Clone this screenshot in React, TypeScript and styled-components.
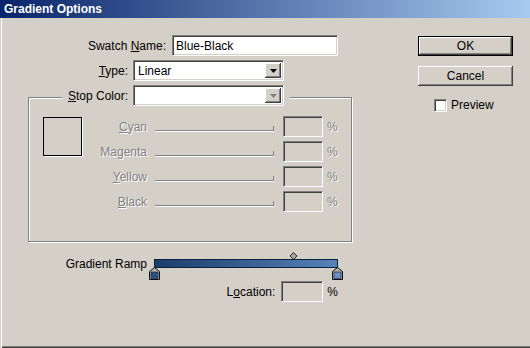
import React from "react";
import styled, { createGlobalStyle, css } from "styled-components";

const GlobalStyle = createGlobalStyle`
  * { box-sizing: border-box; }
  html, body {
    margin: 0;
    background: #d4d0c8;
  }
`;

const sunken = css`
  border: 1px solid;
  border-color: #808080 #ffffff #ffffff #808080;
  box-shadow: inset 1px 1px 0 #404040, inset -1px -1px 0 #d4d0c8;
`;

const raised = css`
  box-shadow: inset -1px -1px 0 #404040, inset 1px 1px 0 #ffffff,
    inset -2px -2px 0 #808080, inset 2px 2px 0 #d4d0c8;
`;

const disabledText = css`
  color: #808080;
  text-shadow: 1px 1px 0 #ffffff;
`;

const Window = styled.div`
  width: 530px;
  height: 348px;
  display: flex;
  flex-direction: column;
  font-family: "Liberation Sans", Arial, sans-serif;
  font-size: 12px;
  color: #000;
  background: #d4d0c8;
  box-shadow: inset 0 -1px 0 #404040, inset 0 -2px 0 #808080;
`;

const TitleBar = styled.div`
  height: 18px;
  padding-left: 4px;
  display: flex;
  align-items: center;
  background: linear-gradient(to right, #0a246a, #a6caf0);
  color: #fff;
  font-weight: bold;
  font-size: 12px;
`;

const Body = styled.div`
  flex: 1;
  display: flex;
  gap: 66px;
  padding: 17px 0 0 28px;
  box-shadow: inset 1px 0 0 #d4d0c8, inset 2px 0 0 #ffffff;
`;

const FormColumn = styled.div`
  width: 324px;
  display: flex;
  flex-direction: column;
`;

const FieldRow = styled.div<{ $gap: number; $top?: number }>`
  display: flex;
  align-items: center;
  gap: ${(p) => p.$gap}px;
  margin-top: ${(p) => p.$top ?? 0}px;
  height: 21px;
`;

const Label = styled.span<{ $width: number; $disabled?: boolean }>`
  width: ${(p) => p.$width}px;
  flex: none;
  text-align: right;
  white-space: nowrap;
  ${(p) => p.$disabled && disabledText}
`;

const TextField = styled.input<{ $width: number }>`
  ${sunken};
  width: ${(p) => p.$width}px;
  height: 21px;
  padding: 0 3px;
  margin: 0;
  font: inherit;
  color: #000;
  background: #fff;
  outline: none;
`;

const SelectBox = styled.div<{ $width: number }>`
  ${sunken};
  width: ${(p) => p.$width}px;
  height: 21px;
  padding: 2px;
  display: flex;
  align-items: center;
  background: #fff;
`;

const SelectValue = styled.span`
  flex: 1;
  padding-left: 2px;
`;

const ArrowButton = styled.div<{ $disabled?: boolean }>`
  ${raised};
  width: 16px;
  height: 15px;
  background: #d4d0c8;
  display: flex;
  align-items: center;
  justify-content: center;
  color: ${(p) => (p.$disabled ? "#808080" : "#000")};
  ${(p) => p.$disabled && "filter: drop-shadow(1px 1px 0 #fff);"}
`;

const GroupBox = styled.fieldset`
  margin: 4px 0 0;
  padding: 6px 0 29px 14px;
  width: 324px;
  border: 1px solid #808080;
  box-shadow: inset 1px 1px 0 #ffffff, 1px 1px 0 #ffffff;
  min-width: 0;
`;

const Legend = styled.legend`
  margin-left: 19px;
  padding: 0 6px 4px;
  display: flex;
  align-items: center;
  gap: 5px;
  background: #d4d0c8;
`;

const GroupContent = styled.div`
  display: flex;
  align-items: flex-start;
`;

const Swatch = styled.div`
  width: 39px;
  height: 39px;
  margin-top: 1px;
  border: 1px solid #000;
  box-shadow: 1px 1px 0 #fff;
  background: #d4d0c8;
`;

const Channels = styled.div`
  display: flex;
  flex-direction: column;
  gap: 4px;
`;

const ChannelRow = styled.div`
  display: flex;
  align-items: center;
  height: 21px;
`;

const Track = styled.div`
  width: 119px;
  height: 5px;
  margin: 4px 9px 0 8px;
  border-bottom: 1px solid #808080;
  border-right: 1px solid #808080;
  box-shadow: 0 1px 0 #fff;
`;

const ValueBox = styled.div<{ $width: number }>`
  ${sunken};
  width: ${(p) => p.$width}px;
  height: 21px;
  background: #d4d0c8;
`;

const Percent = styled.span<{ $disabled?: boolean }>`
  margin-left: 4px;
  ${(p) => p.$disabled && disabledText}
`;

const RampRow = styled.div`
  display: flex;
  align-items: center;
  gap: 7px;
  height: 9px;
  margin-top: 17px;
`;

const RampBar = styled.div`
  position: relative;
  width: 184px;
  height: 9px;
  border: 1px solid #0f213a;
  background: linear-gradient(to right, #1b3e6c, #5781ba);
`;

const Midpoint = styled.svg`
  position: absolute;
  left: 134px;
  top: -8px;
`;

const StopMarker = styled.svg<{ $side: "left" | "right" }>`
  position: absolute;
  top: 7px;
  ${(p) => (p.$side === "left" ? "left: -6px;" : "right: -6px;")}
`;

const LocationRow = styled.div`
  display: flex;
  align-items: center;
  justify-content: flex-end;
  gap: 6px;
  width: 310px;
  height: 21px;
  margin-top: 13px;
`;

const ButtonColumn = styled.div`
  width: 95px;
  margin-top: 1px;
  display: flex;
  flex-direction: column;
`;

const Button = styled.button<{ $default?: boolean }>`
  ${raised};
  width: 95px;
  height: 20px;
  margin: 0 0 10px;
  padding: 0;
  font: inherit;
  color: #000;
  background: #d4d0c8;
  border: ${(p) => (p.$default ? "1px solid #000" : "none")};
`;

const CheckRow = styled.label`
  display: flex;
  align-items: center;
  gap: 4px;
  margin: 2px 0 0 16px;
`;

const CheckBox = styled.span`
  ${sunken};
  width: 13px;
  height: 13px;
  background: #fff;
`;

const Arrow = () => (
  <svg width="7" height="4" viewBox="0 0 7 4">
    <path d="M0 0h7L3.5 4z" fill="currentColor" />
  </svg>
);

const Stop: React.FC<{ side: "left" | "right"; fill: string }> = ({ side, fill }) => (
  <StopMarker $side={side} width="11" height="13" viewBox="0 0 11 13">
    <path d="M5.5 0.5L10.5 4.5V12.5H0.5V4.5Z" fill="#b0b0b0" stroke="#101010" />
    <rect x="2" y="5" width="7" height="6.5" fill={fill} stroke="#0d1d33" strokeWidth="0.6" />
  </StopMarker>
);

const channels = [
  { key: "c", label: <><u>C</u>yan</> },
  { key: "m", label: <>Ma<u>g</u>enta</> },
  { key: "y", label: <><u>Y</u>ellow</> },
  { key: "k", label: <><u>B</u>lack</> },
];

export default function App() {
  return (
    <>
      <GlobalStyle />
      <Window>
        <TitleBar>Gradient Options</TitleBar>
        <Body>
          <FormColumn>
            <FieldRow $gap={6}>
              <Label $width={138}>Swatch <u>N</u>ame:</Label>
              <TextField $width={166} readOnly defaultValue="Blue-Black" />
            </FieldRow>
            <FieldRow $gap={5} $top={4}>
              <Label $width={100}><u>T</u>ype:</Label>
              <SelectBox $width={151}>
                <SelectValue>Linear</SelectValue>
                <ArrowButton><Arrow /></ArrowButton>
              </SelectBox>
            </FieldRow>
            <GroupBox>
              <Legend>
                <Label $width={60}><u>S</u>top Color:</Label>
                <SelectBox $width={151}>
                  <SelectValue />
                  <ArrowButton $disabled><Arrow /></ArrowButton>
                </SelectBox>
              </Legend>
              <GroupContent>
                <Swatch />
                <Channels>
                  {channels.map((c) => (
                    <ChannelRow key={c.key}>
                      <Label $width={65} $disabled>{c.label}</Label>
                      <Track />
                      <ValueBox $width={40} />
                      <Percent $disabled>%</Percent>
                    </ChannelRow>
                  ))}
                </Channels>
              </GroupContent>
            </GroupBox>
            <RampRow>
              <Label $width={119}>Gradient Ramp</Label>
              <RampBar>
                <Midpoint width="9" height="8" viewBox="0 0 9 8">
                  <path d="M4.5 0.5L8 4L4.5 7.5L1 4Z" fill="#a4a4a4" stroke="#2a2a2a" />
                </Midpoint>
                <Stop side="left" fill="#2b4f7e" />
                <Stop side="right" fill="#6a8fc4" />
              </RampBar>
            </RampRow>
            <LocationRow>
              <span>L<u>o</u>cation:</span>
              <ValueBox $width={42} />
              <Percent style={{ marginLeft: -2 }}>%</Percent>
            </LocationRow>
          </FormColumn>
          <ButtonColumn>
            <Button $default>OK</Button>
            <Button>Cancel</Button>
            <CheckRow>
              <CheckBox />
              <span>Preview</span>
            </CheckRow>
          </ButtonColumn>
        </Body>
      </Window>
    </>
  );
}
